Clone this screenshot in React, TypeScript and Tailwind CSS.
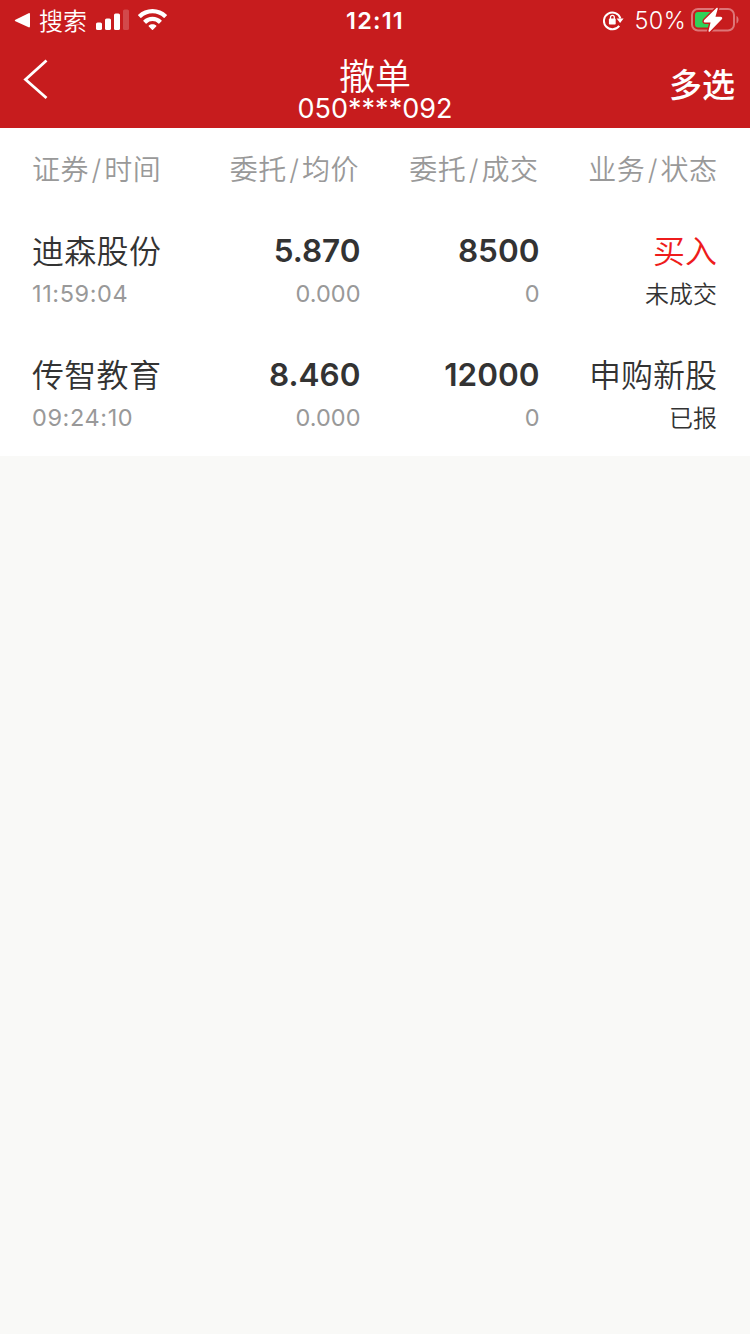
type Order = {
  name: string;
  time: string;
  price: string;
  avgPrice: string;
  amount: string;
  dealt: string;
  business: string;
  status: string;
  buy?: boolean;
};

const orders: Order[] = [
  {
    name: '迪森股份',
    time: '11:59:04',
    price: '5.870',
    avgPrice: '0.000',
    amount: '8500',
    dealt: '0',
    business: '买入',
    status: '未成交',
    buy: true,
  },
  {
    name: '传智教育',
    time: '09:24:10',
    price: '8.460',
    avgPrice: '0.000',
    amount: '12000',
    dealt: '0',
    business: '申购新股',
    status: '已报',
  },
];

const StatusBar = () => (
  <div className="grid h-10 grid-cols-3 text-white">
    <div className="flex h-10 items-center pl-3.5">
      <svg width="17" height="16" viewBox="0 0 17 16" fill="currentColor">
        <path d="M1.4 7.7 14.6 1.2q1.4-.5 1.4 1v12.1q0 1.5-1.4 1L1.4 9.3Q0 8.5 1.4 7.7Z" />
      </svg>
      <span className="ml-2 pt-[3px] text-[24px] font-[350] leading-[37px]">搜索</span>
      <svg className="ml-[9px]" width="33" height="22" viewBox="0 0 33 22" fill="currentColor">
        <rect x="0" y="13.5" width="6" height="7.5" rx="1.6" />
        <rect x="9" y="9.5" width="6" height="11.5" rx="1.6" />
        <rect x="18" y="4.5" width="6" height="16.5" rx="1.6" />
        <rect x="27" y="0.5" width="6" height="20.5" rx="1.6" opacity="0.2" />
      </svg>
      <svg className="ml-[9px]" width="29" height="22" viewBox="0 0 29 22" fill="currentColor">
        <path d="M14.5 0C9 0 3.9 2.1.2 5.7a.6.6 0 0 0 0 .9l2.2 2.2c.3.3.6.3.9 0a16 16 0 0 1 22.4 0c.3.3.6.3.9 0l2.2-2.2a.6.6 0 0 0 0-.9C25.1 2.1 20 0 14.5 0Z" />
        <path d="M14.5 7.8c-3.5 0-6.6 1.3-9 3.5a.6.6 0 0 0 0 .9l2.2 2.2c.3.3.6.3.9 0a8.6 8.6 0 0 1 11.8 0c.3.3.6.3.9 0l2.2-2.2a.6.6 0 0 0 0-.9c-2.4-2.2-5.5-3.5-9-3.5Z" />
        <path d="M14.5 15.2c-1.4 0-2.7.5-3.7 1.3a.6.6 0 0 0 0 .9l3.2 3.3c.3.3.7.3 1 0l3.2-3.3a.6.6 0 0 0 0-.9c-1-.8-2.3-1.3-3.7-1.3Z" />
      </svg>
    </div>
    <div className="h-10 pt-px text-center text-[23.5px] font-semibold leading-10 tracking-[1.2px]">12:11</div>
    <div className="flex h-10 items-center justify-end pr-[11px]">
      <svg width="22" height="22" viewBox="0 -1 22 22" fill="none">
        <path d="M16.2 15.8A8.4 8.4 0 1 1 17.4 8.5" stroke="currentColor" strokeWidth="2" />
        <path d="M13.6 8.5h7L17.1 13Z" fill="currentColor" />
        <rect x="5.9" y="8.6" width="6.8" height="6" rx="0.8" fill="currentColor" />
        <path d="M7.5 9V7.2a1.9 1.9 0 0 1 3.8 0V9" stroke="currentColor" strokeWidth="1.3" />
      </svg>
      <span className="ml-2.5 pt-px text-[23.5px] font-[350] leading-[39px] tracking-[0.3px]">50%</span>
      <svg className="mb-0.5 ml-[5px]" width="48" height="26" viewBox="0 0 48 26" fill="none">
        <rect x="1" y="3" width="42" height="21.5" rx="6" stroke="#fff" strokeOpacity="0.4" strokeWidth="2" />
        <path d="M45.5 10v7.5c1.3-.5 2-2 2-3.7s-.7-3.3-2-3.8Z" fill="#fff" fillOpacity="0.4" />
        <rect x="4" y="6" width="18" height="15.5" rx="3" fill="#30d158" />
        <path
          d="M26 2.5 13.8 14.6q-.8 1.2.8 1.2h6L18.3 25l11.9-12.2q.8-1.3-.8-1.3h-6Z"
          stroke="#c71c1e"
          strokeWidth="4.4"
        />
        <path
          d="M26 2.5 13.8 14.6q-.8 1.2.8 1.2h6L18.3 25l11.9-12.2q.8-1.3-.8-1.3h-6Z"
          fill="#fff"
          stroke="#fff"
          strokeWidth="1.6"
          strokeLinejoin="round"
        />
      </svg>
    </div>
  </div>
);

const TitleBar = () => (
  <div className="grid h-[88px] grid-cols-3 text-white">
    <div className="pl-[23px] pt-[19px]">
      <svg width="26" height="41" viewBox="0 0 26 41" fill="none" stroke="currentColor" strokeWidth="2.8">
        <path d="M23.5 1.5 2.5 20.5l21 18.5" />
      </svg>
    </div>
    <div className="flex flex-col items-center pt-[18px]">
      <div className="h-[35px] text-[36px] font-[350] leading-[38px]">撤单</div>
      <div className="h-8 whitespace-nowrap text-[27px] leading-8">050****092</div>
    </div>
    <div className="pr-[15px] pt-[21px] text-right text-[33px] font-medium leading-[48px]">多选</div>
  </div>
);

const columns = [
  ['证券', '时间'],
  ['委托', '均价'],
  ['委托', '成交'],
  ['业务', '状态'],
];

const HeaderRow = () => (
  <div className="grid h-[82px] grid-cols-[149px_178px_179.5px_179px] pl-8 text-[28px] font-[350] leading-[84px] tracking-[0.5px] text-[#999]">
    {columns.map(([first, second], i) => (
      <div key={first + second} className={i === 0 ? 'whitespace-nowrap' : 'whitespace-nowrap text-right'}>
        {first}
        <span className="mx-[2.5px]">/</span>
        {second}
      </div>
    ))}
  </div>
);

const OrderRow = ({ order }: { order: Order }) => (
  <div className="grid h-[124px] grid-cols-[149px_179.5px_179px_177.5px] pl-8 pt-[18px] text-[#333]">
    <div>
      <div className="h-12 whitespace-nowrap text-[32px] font-[350] leading-12 tracking-[0.3px]">{order.name}</div>
      <div className="text-[23.5px] leading-9 tracking-[0.6px] text-[#999]">{order.time}</div>
    </div>
    <div className="text-right">
      <div className="h-12 text-[31.5px] font-semibold leading-[46px]">{order.price}</div>
      <div className="text-[23.5px] leading-9 text-[#999]">{order.avgPrice}</div>
    </div>
    <div className="text-right">
      <div className="h-12 text-[31.5px] font-semibold leading-[46px]">{order.amount}</div>
      <div className="text-[23.5px] leading-9 text-[#999]">{order.dealt}</div>
    </div>
    <div className="text-right font-[350]">
      <div className={order.buy ? 'h-12 text-[32px] leading-12 text-[#ee1c1c]' : 'h-12 text-[32px] leading-12'}>
        {order.business}
      </div>
      <div className="text-[24px] leading-[37px]">{order.status}</div>
    </div>
  </div>
);

const App = () => {
  return (
    <div className="min-h-screen w-[750px] bg-[#f9f9f7] font-['Inter','Noto_Sans_CJK_SC',sans-serif]">
      <header className="bg-[#c71c1e]">
        <StatusBar />
        <TitleBar />
      </header>
      <main className="h-[328px] bg-white">
        <HeaderRow />
        {orders.map((order) => (
          <OrderRow key={order.name} order={order} />
        ))}
      </main>
    </div>
  );
};

export default App;
